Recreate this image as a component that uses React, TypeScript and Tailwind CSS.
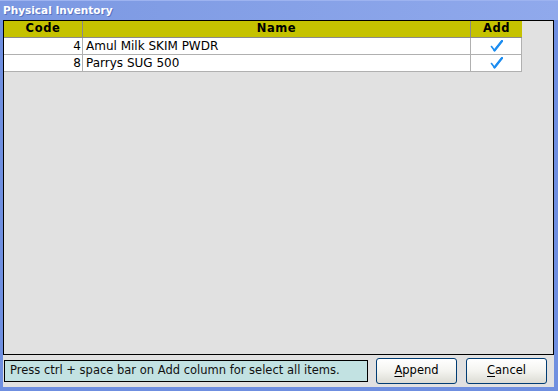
import React from 'react';

/* ------------------------------------------------------------------ */
/*  Data                                                               */
/* ------------------------------------------------------------------ */
const ROWS = [
  { code: 4, name: 'Amul Milk SKIM PWDR', add: true },
  { code: 8, name: 'Parrys SUG 500', add: true },
];

const FONT = { fontFamily: '"DejaVu Sans", Verdana, sans-serif' };

function Check() {
  return (
    <svg width="13" height="12" viewBox="0 0 13 12">
      <path d="M1.5 6.5 L4.5 10.5 L12 1" fill="none" stroke="#1b8cf0" strokeWidth="1.6" strokeLinecap="round" strokeLinejoin="round" />
      <path d="M4.5 10.5 L12 1" fill="none" stroke="#1b8cf0" strokeWidth="2.2" strokeLinecap="round" />
    </svg>
  );
}

function XpButton({ label, accel }: { label: string; accel: string }) {
  const rest = label.slice(1);
  return (
    <button className="w-[81px] h-[26px] rounded-[3px] border border-[#003c74] bg-gradient-to-b from-[#ffffff] via-[#f4f4f0] to-[#dcdcd4] text-[11.5px] text-black leading-none">
      <span className="underline underline-offset-2">{accel}</span>
      {rest}
    </button>
  );
}

/* ------------------------------------------------------------------ */
/*  Component                                                          */
/* ------------------------------------------------------------------ */
export default function App() {
  return (
    <div className="w-[558px] h-[391px] flex flex-col bg-[#6f8fe0] select-none" style={FONT}>
      {/* Title bar */}
      <div className="h-[20px] shrink-0 flex items-center pl-[3px] bg-gradient-to-r from-[#7b98e2] to-[#90a9ec] border-t border-[#9db3f0]">
        <span className="text-[10.5px] font-bold text-white [text-shadow:1px_1px_0_#5a74c0]">
          Physical Inventory
        </span>
      </div>

      {/* Body */}
      <div className="flex-1 flex flex-col ml-[3px] mr-[4px] mb-[4px] bg-[#e1e1e1]">
        {/* Grid */}
        <div className="h-[335px] border border-black bg-[#e1e1e1]">
          <div className="w-[518px] text-[12px] text-black">
            <div className="flex h-[17px] bg-[#c5c200] border-b border-[#8a8a8a] font-bold text-[11.5px] tracking-[0.6px]">
              <div className="w-[79px] flex items-center justify-center border-r border-[#8a8a8a]">Code</div>
              <div className="flex-1 flex items-center justify-center border-r border-[#8a8a8a]">Name</div>
              <div className="w-[51px] flex items-center justify-center">Add</div>
            </div>
            {ROWS.map((r) => (
              <div key={r.code} className="flex h-[17px] bg-white border-b border-[#b0b0b0]">
                <div className="w-[79px] flex items-center justify-end pr-[1px] border-r border-[#b0b0b0]">{r.code}</div>
                <div className="flex-1 flex items-center pl-[3px] border-r border-[#b0b0b0]">{r.name}</div>
                <div className="w-[51px] flex items-center justify-center border-r border-[#b0b0b0]">
                  {r.add && <Check />}
                </div>
              </div>
            ))}
          </div>
        </div>

        {/* Footer */}
        <div className="flex-1 flex items-center pl-[1px] pr-[7px]">
          <div className="w-[364px] h-[22px] flex items-center pl-[5px] border border-black bg-[#c2e2e2] text-[11.5px] text-[#111]">
            Press ctrl + space bar on Add column for select all items.
          </div>
          <div className="ml-auto flex gap-[9px]">
            <XpButton label="Append" accel="A" />
            <XpButton label="Cancel" accel="C" />
          </div>
        </div>
      </div>
    </div>
  );
}
